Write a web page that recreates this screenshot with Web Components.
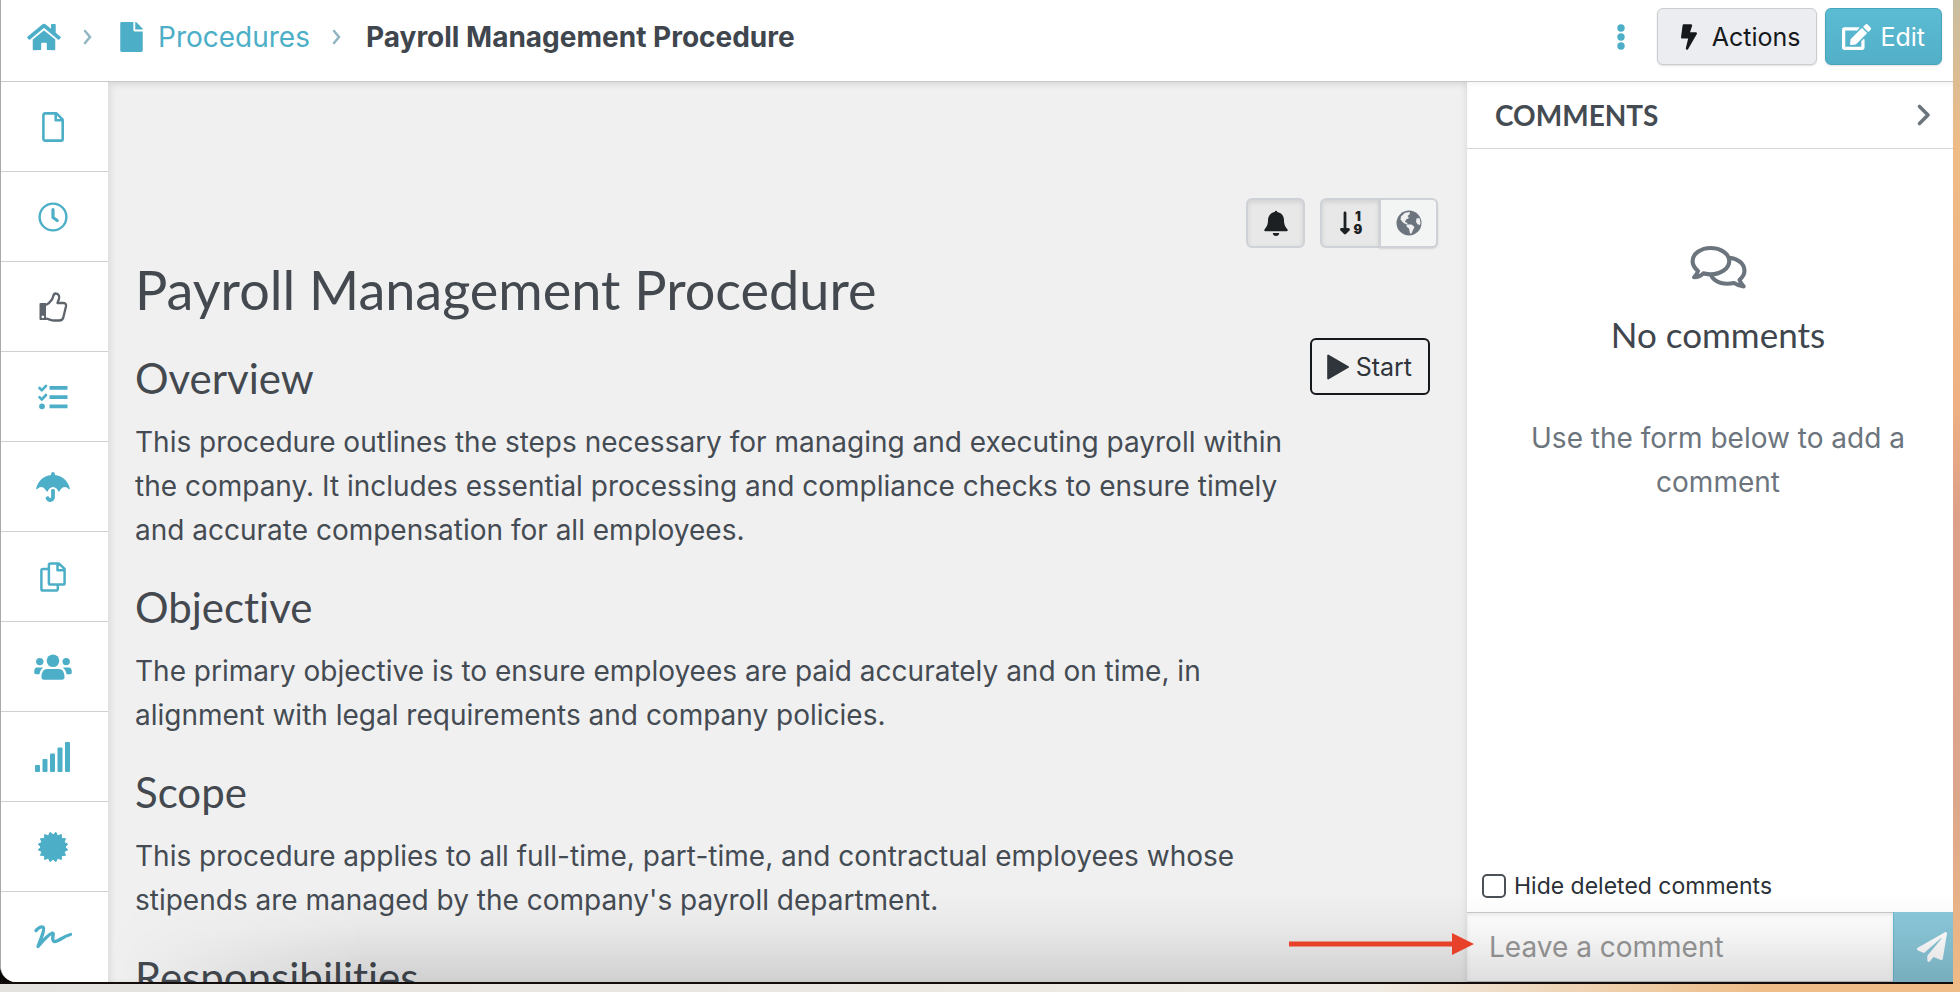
<!DOCTYPE html>
<html lang="en">
<head>
<meta charset="utf-8">
<title>Payroll Management Procedure</title>
<style>
    :root {
        --teal: #4dafc7;
        --ink: #444b52;
        --muted: #6c757d;
        --line: #cfd0d2;
        --heading: Lato, "Open Sans", sans-serif;
    }
    body {
        margin: 0;
        height: 100vh;
        overflow: hidden;
        font: 28px/44px Inter, "Liberation Sans", sans-serif;
        color: var(--ink);
        background: linear-gradient(#c8bda0, #eebb86 15%, #efb183 40%, #dd9f88 52%, #dca68c 80%, #f0bb84);
    }
</style>
</head>
<body>

<app-window>
    <app-header slot="header">
        <crumb-link icon="home" label="Home"></crumb-link>
        <crumb-link icon="fileSolid">Procedures</crumb-link>
        <strong>Payroll Management Procedure</strong>
        <app-button slot="actions" variant="dots" icon="dots" label="More"></app-button>
        <app-button slot="actions" icon="bolt">Actions</app-button>
        <app-button slot="actions" variant="primary" icon="edit">Edit</app-button>
    </app-header>

    <side-nav slot="nav"></side-nav>

    <procedure-page heading="Payroll Management Procedure">
        <procedure-section heading="Overview">This procedure outlines the steps necessary for managing and executing payroll within the company. It includes essential processing and compliance checks to ensure timely and accurate compensation for all employees.</procedure-section>
        <procedure-section heading="Objective">The primary objective is to ensure employees are paid accurately and on time, in alignment with legal requirements and company policies.</procedure-section>
        <procedure-section heading="Scope">This procedure applies to all full-time, part-time, and contractual employees whose stipends are managed by the company's payroll department.</procedure-section>
        <procedure-section heading="Responsibilities"></procedure-section>
    </procedure-page>

    <comments-panel slot="aside" heading="COMMENTS">
        <span slot="title">No comments</span>
        Use the form below to add a comment
    </comments-panel>
</app-window>

<pointer-arrow></pointer-arrow>

<script>
// 16 teeth for the certificate badge
function badgePoints() {
    const points = []
    for (let i = 0; i < 32; i++) {
        const r = i % 2 ? 12 : 15
        const a = Math.PI * (i + 1) / 16
        points.push((15 + r * Math.sin(a)).toFixed(1) + ',' + (15 - r * Math.cos(a)).toFixed(1))
    }
    return points.join(' ')
}

// [viewBox, markup]
const icons = {
    home: ['0 0 576 512', '<path d="M280.37 148.26L96 300.11V464a16 16 0 0 0 16 16l112.06-.29a16 16 0 0 0 15.92-16V368a16 16 0 0 1 16-16h64a16 16 0 0 1 16 16v95.64a16 16 0 0 0 16 16.05L464 480a16 16 0 0 0 16-16V300L295.67 148.26a12.19 12.19 0 0 0-15.3 0zM571.6 251.47L488 182.56V44.05a12 12 0 0 0-12-12h-56a12 12 0 0 0-12 12v72.61L318.47 43a48 48 0 0 0-61 0L4.34 251.47a12 12 0 0 0-1.6 16.9l25.5 31A12 12 0 0 0 45.15 301l235.22-193.74a12.19 12.19 0 0 1 15.3 0L530.9 301a12 12 0 0 0 16.9-1.6l25.5-31a12 12 0 0 0-1.7-16.93z"/>'],
    fileSolid: ['0 0 384 512', '<path d="M224 136V0H24C10.7 0 0 10.7 0 24v464c0 13.3 10.7 24 24 24h336c13.3 0 24-10.7 24-24V160H248c-13.2 0-24-10.8-24-24zm160-14.1v6.1H256V0h6.1c6.4 0 12.5 2.5 17 7l97.9 98c4.5 4.5 7 10.6 7 16.9z"/>'],
    crumb: ['0 0 10 18', '<path d="M2 3l5 6-5 6" fill="none" stroke="currentColor" stroke-width="2.5" stroke-linecap="round"/>'],
    chevron: ['0 0 14 22', '<path d="M2.5 2.5L11 11l-8.5 8.5" fill="none" stroke="currentColor" stroke-width="3.6" stroke-linecap="round" stroke-linejoin="round"/>'],
    dots: ['0 0 8 26', '<circle cx="4" cy="4" r="3.7"/><circle cx="4" cy="13" r="3.7"/><circle cx="4" cy="22" r="3.7"/>'],
    bolt: ['0 0 320 512', '<path d="M296 160H180.6l42.6-129.8C227.2 15 215.7 0 200 0H56C44 0 33.8 8.9 32.2 20.8l-32 240C-1.7 275.2 9.5 288 24 288h118.7L96.6 482.5c-3.6 15.2 8 29.5 23.3 29.5 8.4 0 16.4-4.4 20.8-12l176-304c9.3-15.9-2.2-36-20.7-36z"/>'],
    edit: ['0 0 576 512', '<path d="M402.6 83.2l90.2 90.2c3.8 3.8 3.8 10 0 13.8L274.4 405.6l-92.8 10.3c-12.4 1.4-22.9-9.1-21.5-21.5l10.3-92.8L388.8 83.2c3.8-3.8 10-3.8 13.8 0zm162-22.9l-48.8-48.8c-15.2-15.2-39.9-15.2-55.2 0l-35.4 35.4c-3.8 3.8-3.8 10 0 13.8l90.2 90.2c3.8 3.8 10 3.8 13.8 0l35.4-35.4c15.2-15.3 15.2-40 0-55.2zM384 346.2V448H64V128h229.8c3.2 0 6.2-1.3 8.5-3.5l40-40c7.6-7.6 2.2-20.5-8.5-20.5H48C21.5 64 0 85.5 0 112v352c0 26.5 21.5 48 48 48h352c26.5 0 48-21.5 48-48V306.2c0-10.7-12.9-16-20.5-8.5l-40 40c-2.2 2.3-3.5 5.3-3.5 8.5z"/>'],
    file: ['0 0 22 30', '<path d="M3 1.4h11.5l6.2 6.2V27a1.6 1.6 0 0 1-1.6 1.6H3A1.6 1.6 0 0 1 1.4 27V3A1.6 1.6 0 0 1 3 1.4zM13.7 1.5v6.8h6.8" fill="none" stroke="currentColor" stroke-width="2.6" stroke-linejoin="round"/>'],
    clock: ['0 0 30 30', '<g fill="none" stroke="currentColor"><circle cx="15" cy="15" r="13.4" stroke-width="2.4"/><path d="M15 7.5v8l4.2 3" stroke-width="3.2" stroke-linecap="round" stroke-linejoin="round"/></g>'],
    thumb: ['0 0 28 30', '<path d="M1.5 11H7v17H1.5a1 1 0 0 1-1-1V12a1 1 0 0 1 1-1zM3.8 23.5a1.4 1.4 0 1 0 .01 0z" fill-rule="evenodd"/><path d="M7 13c3-1 4.5-3.5 6.3-6 .9-1.5.6-5.5 3.4-5.5 3.3 0 4 3.5 3.2 5.7-.5 1.5-1.2 2.3-1.4 3.8h6.2c2 0 2.6 1.7 2.3 3.2l-2.7 11.3c-.6 2.3-2 3-4 3H15c-3 0-5-1.5-8-1.8" fill="none" stroke="currentColor" stroke-width="2.3" stroke-linejoin="round"/>'],
    checklist: ['0 0 30 26', '<path d="M11.5 2h18v3.8h-18zM11.5 11.2h18V15h-18zM11.5 20.4h18v3.8h-18z"/><circle cx="4" cy="22.3" r="2.9"/><path d="M1.5 4l2.3 2.3L8 1.8M1.5 13.2l2.3 2.3L8 11" fill="none" stroke="currentColor" stroke-width="2.6" stroke-linecap="round" stroke-linejoin="round"/>'],
    umbrella: ['0 0 576 512', '<path d="M575.7 280.8C547.1 144.5 437.3 62.6 320 49.9V32c0-17.7-14.3-32-32-32s-32 14.3-32 32v17.9C138.3 62.6 29.5 144.5.3 280.8c-2.2 10.1 8.5 21.3 18.7 11.4 52-55 107.7-52.4 158.6 37 5.3 9.5 14.9 8.6 19.7 0 20.2-35.4 44.9-73.2 90.7-73.2 58.5 0 88.2 68.8 90.7 73.2 4.8 8.6 14.4 9.5 19.7 0 51-89.5 107.1-91.4 158.6-37 10.3 10 20.9-1.3 18.7-11.4zM256 301.7V432c0 8.8-7.2 16-16 16-7.8 0-13.2-5.3-15.1-10.7-5.9-16.7-24.1-25.4-40.8-19.5-16.7 5.9-25.4 24.2-19.5 40.8 11.2 31.9 41.6 53.3 75.4 53.3 44.1 0 80-35.9 80-80V301.6c-9.1-7.9-19.8-13.6-32-13.6-12.3.1-22.4 4.8-32 13.7z"/>'],
    copy: ['0 0 26 30', '<path d="M10.5 1.4h8.3l5.8 5.5V21a1.6 1.6 0 0 1-1.6 1.6H10.5A1.6 1.6 0 0 1 8.9 21V3a1.6 1.6 0 0 1 1.6-1.6zM17.5 1.5v6.8h7M8.5 7H3a1.6 1.6 0 0 0-1.6 1.6V27A1.6 1.6 0 0 0 3 28.6h13.2A1.6 1.6 0 0 0 17.8 27v-4" fill="none" stroke="currentColor" stroke-width="2.5" stroke-linejoin="round"/>'],
    users: ['0 0 38 26', '<circle cx="19" cy="6.8" r="6.3"/><circle cx="5.8" cy="7.6" r="3.7"/><circle cx="32.2" cy="7.6" r="3.7"/><path d="M13 15h12c3.5 0 5.5 3.5 5.5 8 0 1.7-.8 2.7-2.5 2.7H10c-1.7 0-2.5-1-2.5-2.7 0-4.5 2-8 5.5-8zM3 13.5h6.3c-2 1.5-3.3 3.5-3.8 6.7H2C.8 20.2.2 19.5.2 18.3c0-2.8.8-4.8 2.8-4.8zM35 13.5h-6.3c2 1.5 3.3 3.5 3.8 6.7H36c1.2 0 1.8-.7 1.8-1.9 0-2.8-.8-4.8-2.8-4.8z"/>'],
    signal: ['0 0 36 30', '<rect y="23" width="5" height="7" rx="1"/><rect x="7.5" y="17" width="5" height="13" rx="1"/><rect x="15" y="11.5" width="5" height="18.5" rx="1"/><rect x="22.5" y="5.5" width="5" height="24.5" rx="1"/><rect x="30" width="5" height="30" rx="1"/>'],
    badge: ['0 0 30 30', `<polygon points="${badgePoints()}" stroke="currentColor" stroke-linejoin="round"/>`],
    signature: ['0 0 38 24', '<path d="M2 5.5C4.5 3 7.5 1.3 9 2.2c2 1.3-1 9-5 19.3C9 15.5 14 9.5 18.5 8c2.5.5-2 6 1.5 8.5 3.5 1 8.5-5 16.5-7" fill="none" stroke="currentColor" stroke-width="3.3" stroke-linecap="round" stroke-linejoin="round"/>'],
    bell: ['0 0 24 26', '<path d="M10.8 2a1.2 1.2 0 0 1 2.4 0c4.3.7 6.8 4 6.8 8 0 5 1.5 7 3.2 9 .9 1 .5 2.3-.9 2.3H1.7C.3 21.3-.1 20 .8 19 2.5 17 4 15 4 10c0-4 2.5-7.3 6.8-8zM8.8 23h6.4c0 1.7-1.4 3-3.2 3s-3.2-1.3-3.2-3z"/>'],
    sort: ['0 0 22 26', '<path d="M5 3v18M1.5 19.5L5 23l3.5-3.5z" stroke="currentColor" stroke-width="2.8" stroke-linecap="round" stroke-linejoin="round"/><g font-family="Inter,sans-serif" font-size="13" font-weight="900" text-anchor="middle"><text x="18" y="11">1</text><text x="18" y="24">9</text></g>'],
    globe: ['0 0 26 26', '<circle cx="13" cy="13" r="12.5"/><path d="M5 6.5l4-3.8 5-.7-.5 2.5-2 1.5 1.5 2-3 1.5-1 2.5 2.5 1-.5 1.5L7.5 13l-3-3.5zM10.5 14.5h5l3 2.5-1.5 3-1.5 3.5H14l-1-5-2.3-1.8zM20.5 8.5l3-.5 1 4.5-.5 2.5-2.5-.8-1.5-2.5z" fill="#f1f1f1"/>'],
    play: ['0 0 22 26', '<path d="M1.2 1.5v23L21 13z" stroke="currentColor" stroke-width="2" stroke-linejoin="round"/>'],
    comments: ['0 0 58 46', '<g fill="none" stroke="currentColor" stroke-width="4.2" stroke-linejoin="round"><path d="M4 33c2.3-2 3.5-4 4-6.5C4 23 2.5 20 2.5 16.5 2.5 9 11 3 21 3s19 6 19 13.5S31 30 21 30c-2.5 0-5-.5-7.5-1C11 31.5 8 33 4 33z"/><path d="M40 13c9 1 15.5 6 15.5 13.5 0 3.5-1.5 6-5 9 .5 2.5 2 4.5 4.3 6.8-4-.3-7-1.3-10-3.5C35 41 25 38.5 21.5 31"/></g>'],
    plane: ['0 0 512 512', '<path d="M476 3.2L12.5 270.6c-18.1 10.4-15.8 35.6 2.2 43.2L121 358.4l287.3-253.2c5.5-4.9 13.3 2.6 8.6 8.3L176 407v80.5c0 23.6 28.5 32.9 42.5 15.8L282 426l124.6 52.2c14.2 6 30.4-2.9 33-18.2l72-432C515 7.8 493.3-6.8 476 3.2z"/>']
}

function icon(name, height) {
    const [box, body] = icons[name]
    const [, , w, h] = box.split(' ')
    return `<svg viewBox="${box}" width="${Math.round(height * w / h)}" height="${height}" fill="currentColor" aria-hidden="true">${body}</svg>`
}

class BaseElement extends HTMLElement {
    connectedCallback() {
        if (this.shadowRoot) return
        const template = document.createElement('template')
        template.innerHTML = `
            <style>
                * { box-sizing: border-box; }
                svg { display: block; flex: none; overflow: visible; }
                h1, h2, h3 { font-variant-ligatures: none !important; }
            </style>
        ` + this.render()
        this.attachShadow({ mode: 'open' }).appendChild(template.content.cloneNode(true))
    }
}

customElements.define('app-window', class extends BaseElement {
    render() {
        return `
            <style>
                :host {
                    display: block;
                    height: 100vh;
                    box-sizing: border-box;
                    padding: 0 7px 8px 0;
                    background: linear-gradient(90deg, #e4e2df, #efebe4 70%, #eebd88 90%) bottom / 100% 8px no-repeat;
                }
                .frame {
                    height: 100%;
                    background: #0b0606;
                    border-bottom: 2px solid #120c0a;
                }
                .window {
                    position: relative;
                    height: 100%;
                    display: grid;
                    grid-template: auto minmax(0, 1fr) / 107px minmax(0, 1fr) 486px;
                    overflow: hidden;
                    background: #fff;
                    border-left: 1px solid #a9a9a9;
                    border-bottom-left-radius: 16px;
                }
                slot[name=header]::slotted(*) { grid-column: 1 / -1; }
                /* shade rising from the lower edge */
                .shade {
                    position: absolute;
                    inset: auto 0 0 107px;
                    height: 90px;
                    pointer-events: none;
                    background: linear-gradient(transparent, rgba(0, 0, 0, .03) 40%, rgba(0, 0, 0, .13));
                    mask-image: linear-gradient(90deg, transparent, #000 260px);
                }
            </style>
            <div class="frame"><div class="window">
                <slot name="header"></slot>
                <slot name="nav"></slot>
                <slot></slot>
                <slot name="aside"></slot>
                <div class="shade"></div>
            </div></div>
        `
    }
})

customElements.define('app-header', class extends BaseElement {
    render() {
        return `
            <style>
                :host {
                    display: flex;
                    align-items: center;
                    justify-content: space-between;
                    padding: 8px 11px 16px 26px;
                    border-bottom: 1px solid #c9cacc;
                }
                nav, .actions { display: flex; align-items: center; }
                .actions { gap: 8px; }
                ::slotted(strong) { font-weight: 700; color: #3f464d; }
            </style>
            <nav aria-label="Breadcrumb"><slot></slot></nav>
            <div class="actions"><slot name="actions"></slot></div>
        `
    }
})

customElements.define('crumb-link', class extends BaseElement {
    render() {
        const name = this.getAttribute('icon')
        const label = this.getAttribute('label')
        return `
            <style>
                :host { display: flex; align-items: center; }
                a { display: flex; align-items: center; gap: 15px; color: var(--teal); text-decoration: none; }
                .sep { color: #8fb6c2; padding: 0 24px 0 22px; }
                :host([label]) .sep { padding-right: 27px; }
            </style>
            <a href="#"${label ? ` aria-label="${label}"` : ''}>${icon(name, 30)}<slot></slot></a>
            <span class="sep">${icon('crumb', 18)}</span>
        `
    }
})

customElements.define('app-button', class extends BaseElement {
    render() {
        const label = this.getAttribute('label')
        return `
            <style>
                :host { display: block; }
                button {
                    display: flex;
                    align-items: center;
                    justify-content: center;
                    gap: 15px;
                    height: 57px;
                    padding: 0 16px 0 23px;
                    font: 25px/38px Inter, "Liberation Sans", sans-serif;
                    color: #16191c;
                    background: #ecedf1;
                    border: 1px solid #cbccd0;
                    border-radius: 6px;
                    box-shadow: 0 1px 2px rgba(0, 0, 0, .12);
                }
                :host([variant=primary]) button {
                    gap: 9px;
                    padding: 0 16px;
                    color: #fff;
                    background: linear-gradient(#5bbcd3, #52afc7);
                    border-color: #48a4bb;
                }
                :host([variant=dots]) button {
                    color: var(--teal);
                    background: none;
                    border: 0;
                    box-shadow: none;
                    padding: 0 24px;
                }
                :host([variant=outline]) button {
                    gap: 7px;
                    padding: 0 16px 0 15px;
                    color: #2f353a;
                    background: #f1f1f2;
                    border: 2px solid #16191c;
                    box-shadow: none;
                }
                :host([variant=tool]) button {
                    width: 59px;
                    height: 50px;
                    padding: 0;
                    color: var(--muted);
                    background: #f3f4f4;
                    border: 2px solid #ced2d6;
                }
                :host([pressed]) button {
                    color: #1c2023;
                    background: #e8e8e8;
                    box-shadow: inset 0 2px 5px rgba(0, 0, 0, .1);
                }
                :host([join=left]) button { border-radius: 6px 0 0 6px; border-right: 0; }
                :host([join=right]) button { border-radius: 0 6px 6px 0; }
            </style>
            <button type="button"${label ? ` aria-label="${label}"` : ''}>${icon(this.getAttribute('icon'), 26)}<slot></slot></button>
        `
    }
})

customElements.define('side-nav', class extends BaseElement {
    render() {
        const items = [
            ['file', 'Document', 30], ['clock', 'History', 30], ['thumb', 'Approve', 30],
            ['checklist', 'Tasks', 26], ['umbrella', 'Risks', 30], ['copy', 'Copies', 30],
            ['users', 'People', 26], ['signal', 'Levels', 30], ['badge', 'Certificates', 30],
            ['signature', 'Signatures', 24]
        ]
        return `
            <style>
                :host { display: block; overflow: hidden; background: #fff; }
                a {
                    display: flex;
                    align-items: center;
                    justify-content: center;
                    height: 90px;
                    padding-right: 4px;
                    color: var(--teal);
                    border-bottom: 1px solid var(--line);
                }
                .thumb { color: #5d646b; }
                a:last-child { border: 0; }
            </style>
            <nav aria-label="Sections">
                ${items.map(([name, label, size]) => `<a class="${name}" href="#" aria-label="${label}">${icon(name, size)}</a>`).join('')}
            </nav>
        `
    }
})

customElements.define('procedure-page', class extends BaseElement {
    render() {
        return `
            <style>
                :host {
                    display: block;
                    overflow: hidden;
                    padding: 116px 29px 0 27px;
                    background: #f0f0f1;
                    box-shadow: inset 3px 3px 6px rgba(0, 0, 0, .08), inset -3px 0 5px rgba(0, 0, 0, .05);
                }
                .tools { display: flex; justify-content: flex-end; gap: 15px; }
                .group { display: flex; }
                h1 { margin: 8px 0 12px; font: 400 54px/68px var(--heading); color: #43494f; }
                .body { display: flex; align-items: flex-start; gap: 16px; }
                .sections { flex: 1; }
                app-button[variant=outline] { margin: 2px 8px 0 0; }
            </style>
            <div class="tools">
                <app-button variant="tool" icon="bell" label="Notifications" pressed></app-button>
                <div class="group">
                    <app-button variant="tool" icon="sort" label="Sort" join="left" pressed></app-button>
                    <app-button variant="tool" icon="globe" label="Language" join="right"></app-button>
                </div>
            </div>
            <h1>${this.getAttribute('heading')}</h1>
            <div class="body">
                <div class="sections"><slot></slot></div>
                <app-button variant="outline" icon="play">Start</app-button>
            </div>
        `
    }
})

customElements.define('procedure-section', class extends BaseElement {
    render() {
        return `
            <style>
                :host { display: block; padding-top: 16px; }
                h2 { margin: 0 0 16px; font: 400 42px/52px var(--heading); color: #43494f; }
                p { margin: 0 0 13px; }
            </style>
            <h2>${this.getAttribute('heading')}</h2>
            <p><slot></slot></p>
        `
    }
})

customElements.define('comments-panel', class extends BaseElement {
    render() {
        return `
            <style>
                :host { display: flex; flex-direction: column; background: #fff; min-width: 0; }
                header {
                    display: flex;
                    align-items: center;
                    justify-content: space-between;
                    height: 67px;
                    padding: 0 22px 0 28px;
                    border-bottom: 1px solid #d5d6d8;
                    box-shadow: inset 0 3px 4px rgba(0, 0, 0, .04);
                }
                h2 { margin: 0; font: 700 28px/36px var(--heading); }
                header button { padding: 0; border: 0; background: none; color: var(--muted); }
                .empty {
                    flex: 1;
                    display: flex;
                    flex-direction: column;
                    align-items: center;
                    padding: 96px 32px 0 48px;
                    text-align: center;
                    color: var(--muted);
                }
                h3 { margin: 22px 0 60px; font: 400 35px/44px var(--heading); color: #3f464d; }
                p { margin: 0; }
                .hide {
                    display: flex;
                    align-items: center;
                    gap: 8px;
                    padding: 0 15px 8px;
                    font-size: 23px;
                    line-height: 36px;
                    color: #2b3036;
                }
                .hide input {
                    appearance: none;
                    width: 24px;
                    height: 24px;
                    margin: 0;
                    border: 2px solid #4c5157;
                    border-radius: 5px;
                    background: #fff;
                }
                form { display: flex; height: 70px; }
                form input {
                    flex: 1;
                    min-width: 0;
                    padding: 0 22px;
                    font: inherit;
                    color: inherit;
                    border: 1px solid #c9cacd;
                    border-width: 1px 0;
                    box-shadow: inset 0 2px 4px rgba(0, 0, 0, .08);
                }
                form input::placeholder { color: #9a9a9a; opacity: 1; }
                form button {
                    display: flex;
                    align-items: center;
                    justify-content: flex-end;
                    width: 60px;
                    padding: 0 6px;
                    color: #fff;
                    background: #8ac8da;
                    border: 0;
                    border-left: 1px solid #6db9ce;
                }
            </style>
            <header>
                <h2>${this.getAttribute('heading')}</h2>
                <button type="button" aria-label="Collapse">${icon('chevron', 22)}</button>
            </header>
            <div class="empty">
                ${icon('comments', 45)}
                <h3><slot name="title"></slot></h3>
                <p><slot></slot></p>
            </div>
            <label class="hide"><input type="checkbox">Hide deleted comments</label>
            <form>
                <input type="text" placeholder="Leave a comment" aria-label="Leave a comment">
                <button type="button" aria-label="Send">${icon('plane', 30)}</button>
            </form>
        `
    }
})

// annotation that lies over the page and points at the comment box
customElements.define('pointer-arrow', class extends BaseElement {
    render() {
        return `
            <style>
                :host { position: absolute; right: 486px; bottom: 37px; color: #e8412a; }
            </style>
            <svg viewBox="0 0 185 22" width="185" height="22" fill="currentColor" aria-hidden="true">
                <path d="M0 8.5h163V0l22 11-22 11v-8.5H0z"/>
            </svg>
        `
    }
})
</script>
</body>
</html>
